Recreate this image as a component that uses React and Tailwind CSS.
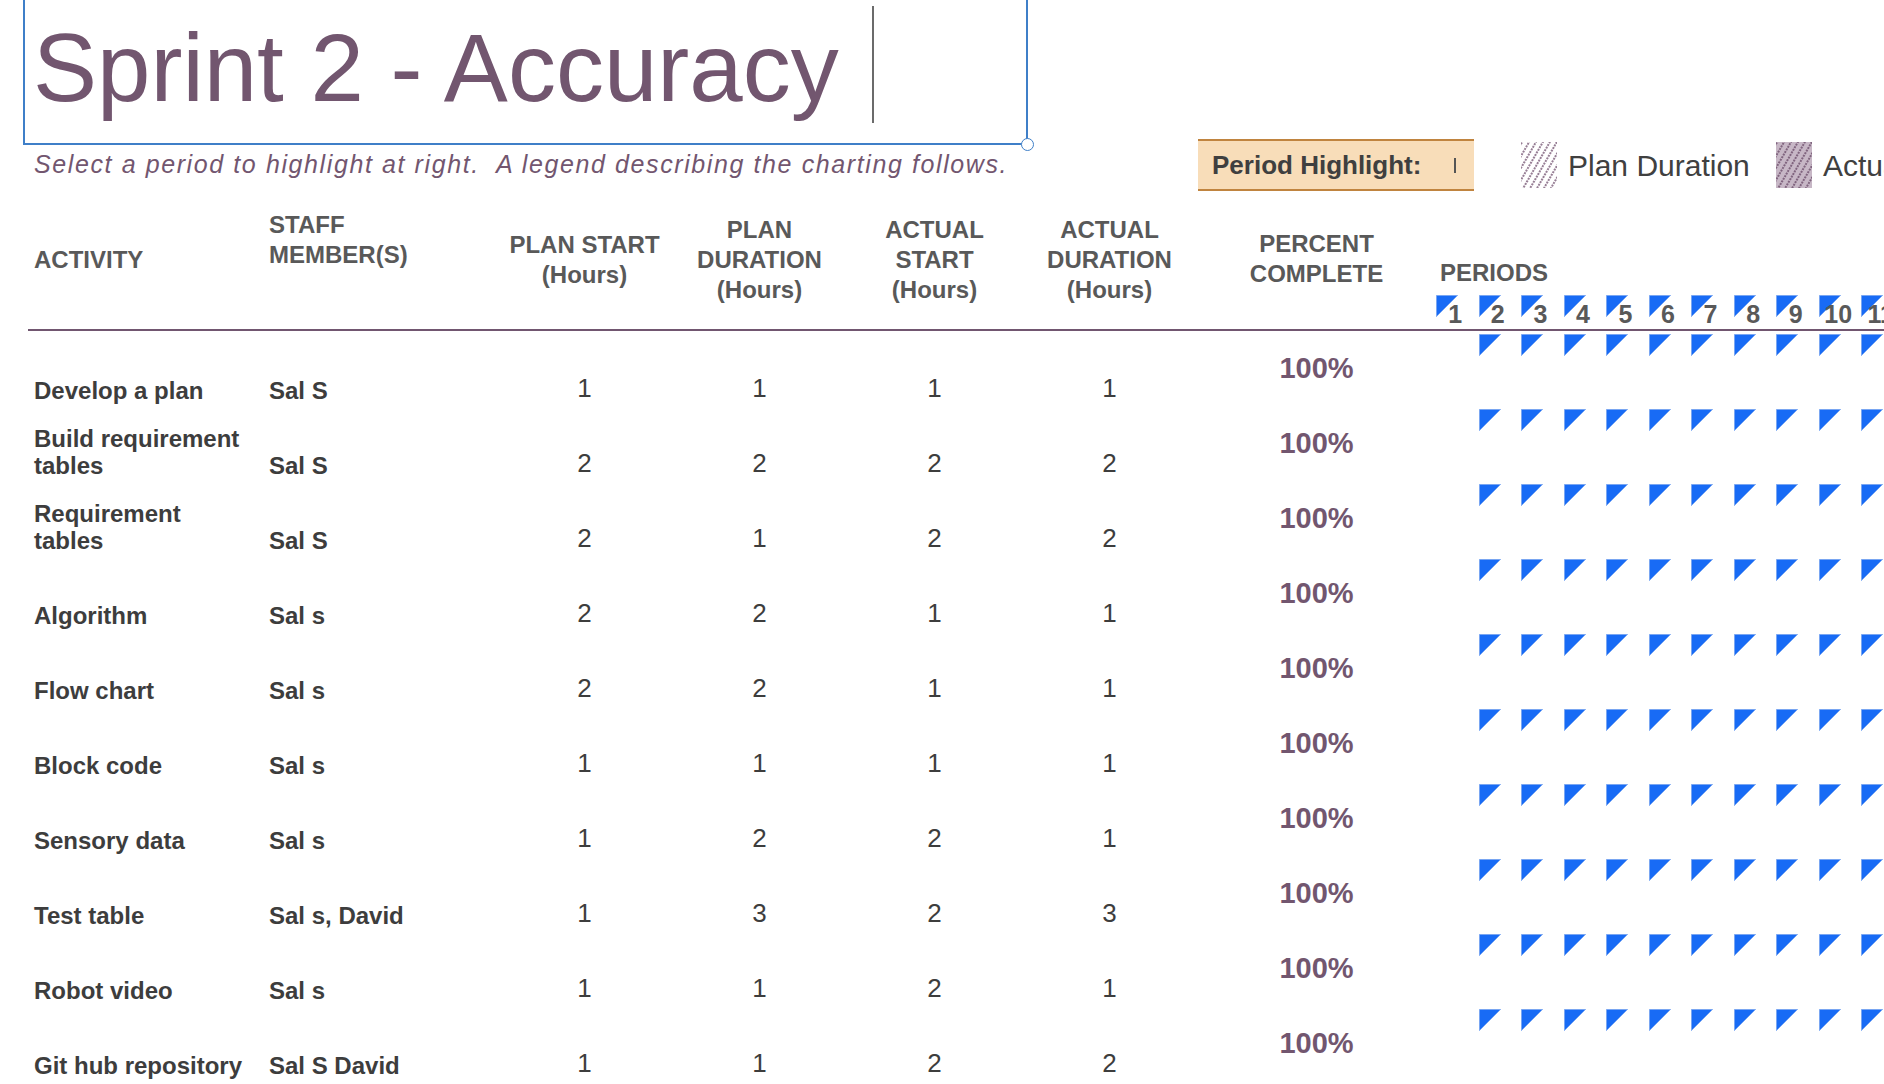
import React from "react";

const rows = [
  { a: ["Develop a plan"], s: "Sal S", v: [1, 1, 1, 1] },
  { a: ["Build requirement", "tables"], s: "Sal S", v: [2, 2, 2, 2] },
  { a: ["Requirement", "tables"], s: "Sal S", v: [2, 1, 2, 2] },
  { a: ["Algorithm"], s: "Sal s", v: [2, 2, 1, 1] },
  { a: ["Flow chart"], s: "Sal s", v: [2, 2, 1, 1] },
  { a: ["Block code"], s: "Sal s", v: [1, 1, 1, 1] },
  { a: ["Sensory data"], s: "Sal s", v: [1, 2, 2, 1] },
  { a: ["Test table"], s: "Sal s, David", v: [1, 3, 2, 3] },
  { a: ["Robot video"], s: "Sal s", v: [1, 1, 2, 1] },
  { a: ["Git hub repository"], s: "Sal S David", v: [1, 1, 2, 2] },
];

const periods = [1, 2, 3, 4, 5, 6, 7, 8, 9, 10, 11];

function Tri({ top = "top-0" }) {
  return (
    <svg
      width="22"
      height="22"
      viewBox="0 0 22 22"
      className={"absolute left-0 " + top}
    >
      <polygon
        points="0.5,0.5 21.5,0.5 0.5,21.5"
        fill="#186bf5"
        stroke="#79a6f2"
        strokeWidth="1"
      />
    </svg>
  );
}

function Hatch({ id, bg, line }) {
  return (
    <svg width="36" height="46" viewBox="0 0 36 46" className="shrink-0">
      <defs>
        <pattern
          id={id}
          width="6"
          height="6"
          patternUnits="userSpaceOnUse"
          patternTransform="rotate(30)"
        >
          <line
            x1="1"
            y1="0"
            x2="1"
            y2="6"
            stroke={line}
            strokeWidth="1.6"
            strokeDasharray="2 1"
          />
        </pattern>
      </defs>
      <rect x="0" y="0" width="36" height="46" fill={bg} />
      <rect x="0" y="0" width="36" height="46" fill={`url(#${id})`} />
    </svg>
  );
}

const numCols = [
  { lines: ["PLAN START", "(Hours)"], pt: "pt-[39px]" },
  { lines: ["PLAN", "DURATION", "(Hours)"], pt: "pt-[24px]" },
  { lines: ["ACTUAL", "START", "(Hours)"], pt: "pt-[24px]" },
  { lines: ["ACTUAL", "DURATION", "(Hours)"], pt: "pt-[24px]" },
];

export default function App() {
  return (
    <div className="w-[1884px] h-[1084px] overflow-hidden bg-white font-['Liberation_Sans',Arial,sans-serif]">
      {/* Title text box */}
      <div className="relative ml-[23px] w-[1005px] h-[145px] border-x-2 border-b-2 border-[#3f7fc8]">
        <div className="pl-[8px] pt-[20px] text-[96px] leading-none text-[#72566f] whitespace-nowrap">
          Sprint 2 - Accuracy
        </div>
        <div className="absolute left-[847px] top-[6px] w-[2px] h-[117px] bg-[#6b6b6b]" />
        <div className="absolute -right-[8px] -bottom-[8px] w-[13px] h-[13px] rounded-full border-[1.5px] border-[#3f7fc8] bg-white" />
      </div>

      {/* Subtitle + highlight + legend */}
      <div className="-mt-[6px] h-[52px] flex items-center">
        <div className="w-[1198px] shrink-0 pl-[34px] italic text-[25px] tracking-[1.6px] text-[#72566f] whitespace-nowrap">
          Select a period to highlight at right.{"\u00a0 "}A legend describing the charting follows.
        </div>
        <div className="w-[276px] h-[52px] shrink-0 flex items-center bg-[#f8ddb9] border-y-2 border-[#c0843f] pl-[14px]">
          <span className="text-[26px] font-bold text-[#3f3f3f] whitespace-nowrap">
            Period Highlight:
          </span>
          <span className="ml-auto mr-[18px] w-[2px] h-[15px] bg-[#555555]" />
        </div>
        <div className="ml-[47px] flex items-center shrink-0">
          <Hatch id="planHatch" bg="#ffffff" line="#7b5c79" />
          <div className="w-[219px] pl-[11px] text-[30px] text-[#404040] whitespace-nowrap">
            Plan Duration
          </div>
          <Hatch id="actualHatch" bg="#c7b7c6" line="#6e4f6c" />
          <div className="pl-[11px] text-[30px] text-[#404040] whitespace-nowrap">
            Actual Duration
          </div>
        </div>
      </div>

      {/* Table */}
      <div className="ml-[28px] w-[1900px]">
        {/* header */}
        <div className="flex h-[138px] text-[24px] leading-[30px] font-bold text-[#595959]">
          <div className="w-[235px] shrink-0 pl-[6px] pt-[54px]">ACTIVITY</div>
          <div className="w-[234px] shrink-0 pl-[6px] pt-[19px]">
            STAFF
            <br />
            MEMBER(S)
          </div>
          {numCols.map((c, i) => (
            <div key={i} className={"w-[175px] shrink-0 text-center " + c.pt}>
              {c.lines.map((l, j) => (
                <div key={j}>{l}</div>
              ))}
            </div>
          ))}
          <div className="w-[239px] shrink-0 text-center pt-[38px]">
            PERCENT
            <br />
            COMPLETE
          </div>
          <div className="shrink-0 flex flex-col">
            <div className="pl-[4px] pt-[68px] h-[97px] leading-[28px]">PERIODS</div>
            <div className="mt-[7px] flex h-[34px]">
              {periods.map((p) => (
                <div
                  key={p}
                  className="relative w-[42.55px] h-[34px] shrink-0 flex items-end justify-center pb-[2px] pr-[4px]"
                >
                  <Tri />
                  <span className="relative text-[25px] leading-none font-bold text-[#595959]">
                    {p}
                  </span>
                </div>
              ))}
            </div>
          </div>
        </div>
        <div className="h-[2px] bg-[#715670]" />

        {/* rows */}
        {rows.map((r, i) => (
          <div key={i} className="flex h-[75px]">
            <div className="w-[235px] shrink-0 pl-[6px] pb-[2px] flex items-end text-[24px] leading-[27px] font-bold text-[#3d3d3d] whitespace-nowrap">
              <div>
                {r.a.map((l, j) => (
                  <div key={j}>{l}</div>
                ))}
              </div>
            </div>
            <div className="w-[234px] shrink-0 pl-[6px] pb-[2px] flex items-end text-[24px] leading-[27px] font-bold text-[#3d3d3d] whitespace-nowrap">
              {r.s}
            </div>
            {r.v.map((v, j) => (
              <div
                key={j}
                className="w-[175px] shrink-0 pb-[3px] flex items-end justify-center text-[26px] leading-[30px] text-[#3d3d3d]"
              >
                {v}
              </div>
            ))}
            <div className="w-[239px] shrink-0 flex items-center justify-center text-[29px] font-bold text-[#72566f]">
              100%
            </div>
            <div className="flex shrink-0">
              {periods.map((p) => (
                <div key={p} className="relative w-[42.55px] h-[75px] shrink-0">
                  {p > 1 && <Tri top="top-[3px]" />}
                </div>
              ))}
            </div>
          </div>
        ))}
      </div>
    </div>
  );
}
